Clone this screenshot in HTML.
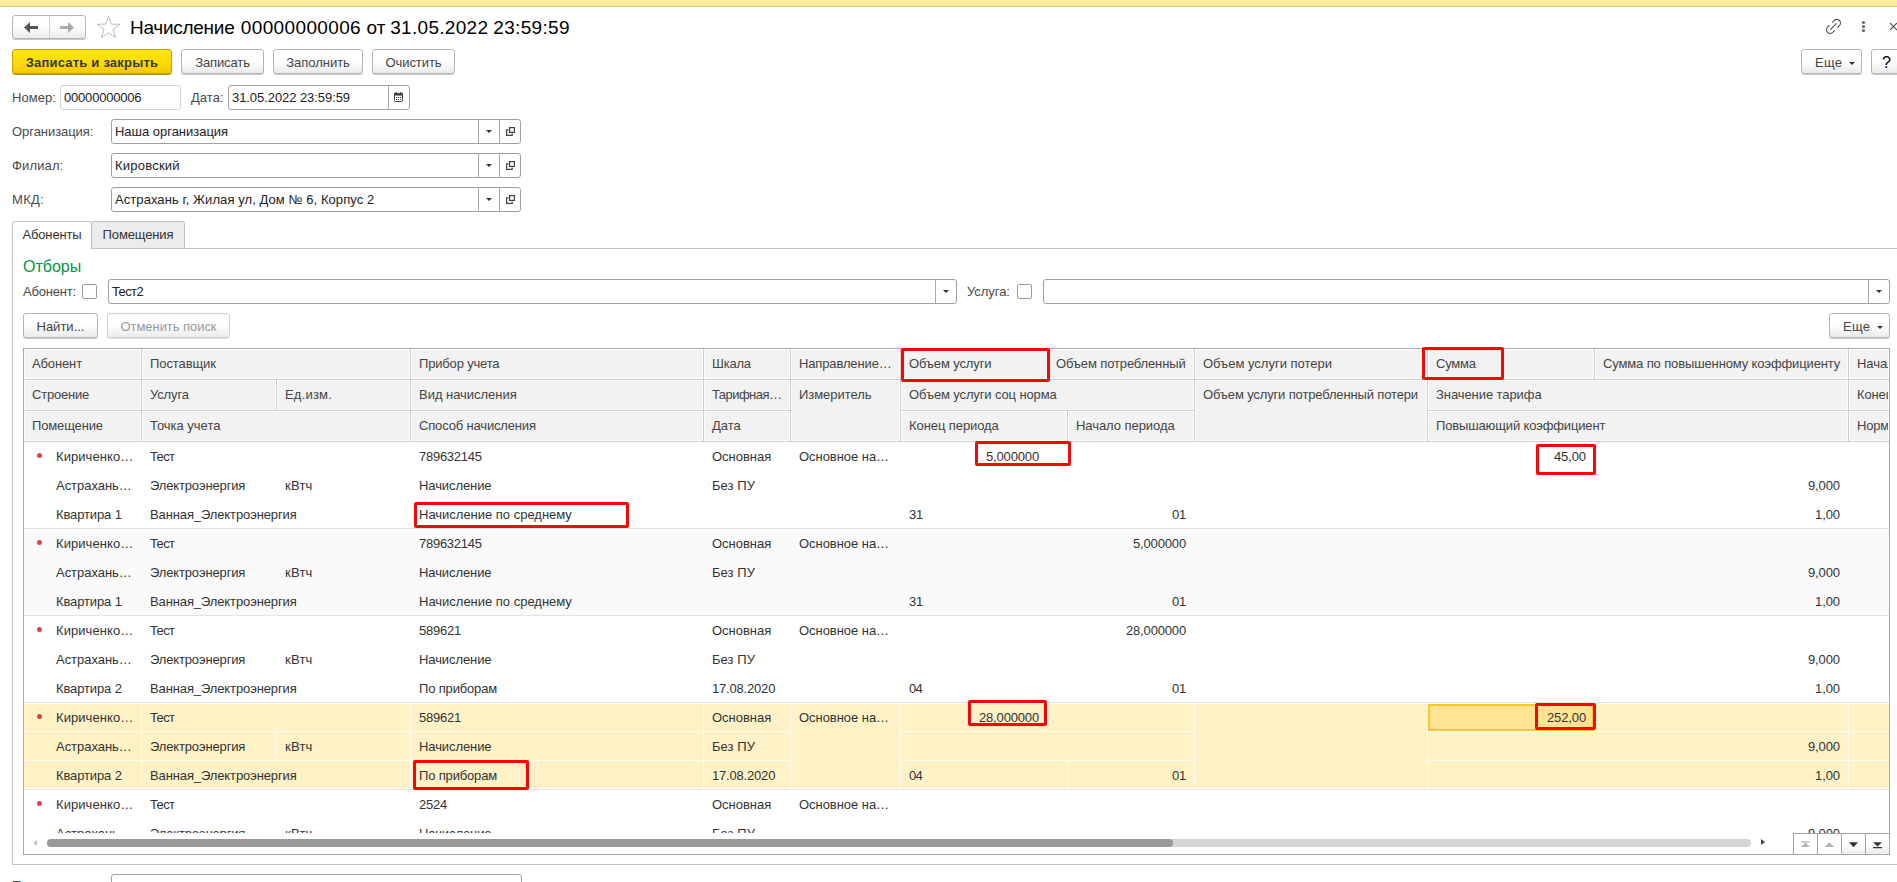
<!DOCTYPE html>
<html lang="ru"><head><meta charset="utf-8"><title>Начисление</title>
<style>
*{box-sizing:border-box;margin:0;padding:0}
html,body{width:1897px;height:882px;overflow:hidden;background:#fff}
body{position:relative;font-family:"Liberation Sans",Arial,sans-serif;font-size:13px;color:#333;line-height:15px}
.abs{position:absolute}
.topband{left:0;top:0;width:1897px;height:7px;background:#fbec9d;border-bottom:1px solid #d9c873}
.btn{position:absolute;height:25px;border:1px solid #b5b5b5;border-radius:3px;background:linear-gradient(#ffffff 0%,#ffffff 45%,#ebebeb 100%);box-shadow:0 1px 0 0 #c8c8c8;color:#444;text-align:center;line-height:25px;font-size:13px;white-space:nowrap}
.btn.def{background:linear-gradient(#ffe612 0%,#ffdc00 50%,#f3c900 100%);border-color:#c2a100;color:#35384d;font-weight:bold;box-shadow:0 1px 0 0 #b89b10}
.btn.dis{color:#9a9a9a;border-color:#cfcfcf;box-shadow:0 1px 0 0 #dedede}
.lbl{position:absolute;white-space:nowrap;color:#4a4a4a}
.inp{position:absolute;height:25px;border:1px solid #a0a0a0;border-radius:3px;background:#fff;color:#222;line-height:23px;padding-left:3px;white-space:nowrap;overflow:hidden}
.inp.ro{border-color:#d4d4d4}
.inp .sep{position:absolute;top:0;bottom:0;width:1px;background:#a8a8a8}
.tri{position:absolute;width:0;height:0;border-left:3px solid transparent;border-right:3px solid transparent;border-top:3px solid #333}
.title{position:absolute;left:131px;top:16px;font-size:19px;line-height:24px;color:#000;white-space:nowrap}
.chk{position:absolute;width:15px;height:15px;border:1px solid #9a9a9a;border-radius:2px;background:#fff}
.tab{position:absolute;top:221px;height:28px;border:1px solid #c3c3c3;border-bottom:none;border-radius:3px 3px 0 0;text-align:center;line-height:26px;color:#333}
.hc{position:absolute;background:#f2f2f2;color:#444;white-space:nowrap;overflow:hidden;padding-left:7px;line-height:28px;border:1px solid #fdfdfd}
.c{position:absolute;white-space:nowrap;overflow:hidden;color:#333;height:29px;line-height:29px}
.r{text-align:right}
.red{position:absolute;border:3px solid #fb0408;border-radius:2px}
</style></head>
<body>
<div class="abs topband"></div>
<div class="btn" style="left:12px;top:15px;width:74px;height:24px"></div>
<div class="abs" style="left:49px;top:16px;width:1px;height:22px;background:#cfcfcf"></div>
<svg class="abs" style="left:0;top:0" width="130" height="44" viewBox="0 0 130 44"><path d="M24 27.5L30 22V26H38V29H30V33z" fill="#555"/><path d="M60 26H68V22L74 27.5L68 33V29H60z" fill="#ababab"/><path d="M108.5 16.2L111.3 24.1L119.8 24.3L113 29.5L115.5 37.6L108.5 32.8L101.5 37.6L104 29.5L97.2 24.3L105.7 24.1z" fill="#fff" stroke="#b4bec9" stroke-width="1"/></svg>
<div class="title"><span style="margin-left:-0.96px;letter-spacing:-0.280px">Начисление</span> <span style="margin-left:1.12px;letter-spacing:0.354px">00000000006</span> <span style="margin-left:0.23px;letter-spacing:0.054px">от</span> <span style="margin-left:-0.58px;letter-spacing:0.310px">31.05.2022</span> <span style="margin-left:-0.40px;letter-spacing:0.328px">23:59:59</span></div>
<svg class="abs" style="left:1817px;top:10px" width="80" height="34" viewBox="1817 10 80 34"><g transform="translate(1833.5 26.4) rotate(-45)" fill="none" stroke="#5c5c5c" stroke-width="1.2" stroke-linecap="round"><path d="M2.4 -3.65H4.7A3.65 3.65 0 0 1 4.7 3.65H2.4"/><path d="M-2.4 -3.65H-4.7A3.65 3.65 0 0 0 -4.7 3.65H-2.4"/><path d="M-4 0H4"/></g><circle cx="1863.5" cy="22.5" r="1.55" fill="#666"/><circle cx="1863.5" cy="26.5" r="1.55" fill="#666"/><circle cx="1863.5" cy="30.6" r="1.55" fill="#666"/><path d="M1890 23l7 7M1890 30l7-7" stroke="#555" stroke-width="1.1" fill="none"/></svg>
<div class="btn def" style="left:12px;top:49px;width:160px"><span style="letter-spacing:0.200px">Записать и закрыть</span></div>
<div class="btn " style="left:181px;top:49px;width:83px"><span style="letter-spacing:-0.105px">Записать</span></div>
<div class="btn " style="left:273px;top:49px;width:90px"><span style="letter-spacing:-0.012px">Заполнить</span></div>
<div class="btn " style="left:372px;top:49px;width:83px"><span style="letter-spacing:-0.074px">Очистить</span></div>
<div class="btn" style="left:1801px;top:49px;width:61px;text-align:left;padding-left:13px"><span style="letter-spacing:0.3px">Еще</span><div class="tri" style="left:47px;top:12px"></div></div>
<div class="btn" style="left:1871px;top:49px;width:32px;color:#000;font-size:16px;text-align:left;padding-left:10px">?</div>
<div class="lbl" style="left:12px;top:90px"><span style="letter-spacing:0.065px">Номер:</span></div>
<div class="inp ro" style="left:60px;top:85px;width:121px"><span style="letter-spacing:-0.195px">00000000006</span></div>
<div class="lbl" style="left:191px;top:90px"><span style="letter-spacing:0.034px">Дата:</span></div>
<div class="inp" style="left:228px;top:85px;width:182px"><span style="letter-spacing:-0.067px">31.05.2022 23:59:59</span><div class="sep" style="left:159px"></div><svg class="abs" style="left:165px;top:6px" width="9" height="10" viewBox="0 0 9 10"><rect x="0.5" y="1.5" width="8" height="8" rx="0.8" fill="#fff" stroke="#444" stroke-width="1"/><rect x="0" y="1" width="9" height="2.6" fill="#444"/><rect x="1.6" y="0" width="1.3" height="2" fill="#444"/><rect x="6.1" y="0" width="1.3" height="2" fill="#444"/><path d="M2 5.5h1.1M4 5.5h1.1M6 5.5h1.1M2 7.5h1.1M4 7.5h1.1M6 7.5h1.1" stroke="#444" stroke-width="1.1"/></svg></div>
<div class="lbl" style="left:12px;top:124px"><span style="letter-spacing:-0.055px">Организация:</span></div>
<div class="inp" style="left:111px;top:119px;width:410px"><span style="letter-spacing:-0.022px">Наша организация</span><div class="sep" style="left:366px"></div><div class="tri" style="left:374px;top:10px"></div><div class="sep" style="left:387px"></div><svg class="abs" style="left:394px;top:7px" width="9" height="9" viewBox="0 0 9 9"><rect x="3.6" y="0.6" width="4.8" height="4.8" fill="#fff" stroke="#444" stroke-width="1.2"/><path d="M2.4 2.9H0.6V8.4H6.2V6.5" fill="none" stroke="#444" stroke-width="1.2"/></svg></div>
<div class="lbl" style="left:12px;top:158px"><span style="letter-spacing:0.136px">Филиал:</span></div>
<div class="inp" style="left:111px;top:153px;width:410px"><span style="letter-spacing:0.226px">Кировский</span><div class="sep" style="left:366px"></div><div class="tri" style="left:374px;top:10px"></div><div class="sep" style="left:387px"></div><svg class="abs" style="left:394px;top:7px" width="9" height="9" viewBox="0 0 9 9"><rect x="3.6" y="0.6" width="4.8" height="4.8" fill="#fff" stroke="#444" stroke-width="1.2"/><path d="M2.4 2.9H0.6V8.4H6.2V6.5" fill="none" stroke="#444" stroke-width="1.2"/></svg></div>
<div class="lbl" style="left:12px;top:192px"><span style="letter-spacing:0.296px">МКД:</span></div>
<div class="inp" style="left:111px;top:187px;width:410px"><span style="letter-spacing:0.071px">Астрахань г, Жилая ул, Дом № 6, Корпус 2</span><div class="sep" style="left:366px"></div><div class="tri" style="left:374px;top:10px"></div><div class="sep" style="left:387px"></div><svg class="abs" style="left:394px;top:7px" width="9" height="9" viewBox="0 0 9 9"><rect x="3.6" y="0.6" width="4.8" height="4.8" fill="#fff" stroke="#444" stroke-width="1.2"/><path d="M2.4 2.9H0.6V8.4H6.2V6.5" fill="none" stroke="#444" stroke-width="1.2"/></svg></div>
<div class="abs" style="left:12px;top:248px;width:1890px;height:617px;border:1px solid #c3c3c3;border-right:none"></div>
<div class="tab" style="left:12px;width:80px;background:#fff;height:27px"><span style="letter-spacing:-0.154px">Абоненты</span></div>
<div class="abs" style="left:13px;top:248px;width:78px;height:1px;background:#fff"></div>
<div class="tab" style="left:91px;width:94px;background:#ececec;height:27px;border-bottom:none"><span style="letter-spacing:-0.127px">Помещения</span></div>
<div class="abs" style="left:23px;top:258px;font-size:16px;line-height:18px;color:#009646">Отборы</div>
<div class="lbl" style="left:23px;top:284px"><span style="letter-spacing:-0.198px">Абонент:</span></div>
<div class="chk" style="left:82px;top:284px"></div>
<div class="inp" style="left:108px;top:279px;width:849px"><span style="letter-spacing:-0.627px">Тест2</span><div class="sep" style="left:826px"></div><div class="tri" style="left:834px;top:10px"></div></div>
<div class="lbl" style="left:967px;top:284px"><span style="letter-spacing:-0.061px">Услуга:</span></div>
<div class="chk" style="left:1017px;top:284px"></div>
<div class="inp" style="left:1043px;top:279px;width:847px"><div class="sep" style="left:824px"></div><div class="tri" style="left:832px;top:10px"></div></div>
<div class="btn " style="left:23px;top:313px;width:75px"><span style="letter-spacing:0.009px">Найти...</span></div>
<div class="btn dis" style="left:107px;top:313px;width:123px"><span style="letter-spacing:-0.052px">Отменить поиск</span></div>
<div class="btn" style="left:1829px;top:313px;width:61px;text-align:left;padding-left:13px"><span style="letter-spacing:0.3px">Еще</span><div class="tri" style="left:47px;top:12px"></div></div>
<div class="abs" style="left:23px;top:348px;width:1867px;height:507px;border:1px solid #a8a8a8;background:#fff;overflow:hidden" id="tbl">
<div class="abs" style="left:0;top:0;width:1865px;height:93px;background:#cecece"></div>
<div class="hc" style="left:0px;top:0px;width:117px;height:30px"><span style="letter-spacing:-0.127px">Абонент</span></div>
<div class="hc" style="left:0px;top:31px;width:117px;height:30px"><span style="letter-spacing:-0.213px">Строение</span></div>
<div class="hc" style="left:0px;top:62px;width:117px;height:30px"><span style="letter-spacing:-0.149px">Помещение</span></div>
<div class="hc" style="left:118px;top:0px;width:268px;height:30px"><span style="letter-spacing:-0.090px">Поставщик</span></div>
<div class="hc" style="left:118px;top:31px;width:134px;height:30px"><span style="letter-spacing:-0.136px">Услуга</span></div>
<div class="hc" style="left:253px;top:31px;width:133px;height:30px"><span style="letter-spacing:0.194px">Ед.изм.</span></div>
<div class="hc" style="left:118px;top:62px;width:268px;height:30px"><span style="letter-spacing:-0.015px">Точка учета</span></div>
<div class="hc" style="left:387px;top:0px;width:292px;height:30px"><span style="letter-spacing:-0.170px">Прибор учета</span></div>
<div class="hc" style="left:387px;top:31px;width:292px;height:30px"><span style="letter-spacing:-0.026px">Вид начисления</span></div>
<div class="hc" style="left:387px;top:62px;width:292px;height:30px"><span style="letter-spacing:-0.158px">Способ начисления</span></div>
<div class="hc" style="left:680px;top:0px;width:86px;height:30px"><span style="letter-spacing:-0.245px">Шкала</span></div>
<div class="hc" style="left:680px;top:31px;width:86px;height:30px"><span style="letter-spacing:-0.531px">Тарифная…</span></div>
<div class="hc" style="left:680px;top:62px;width:86px;height:30px"><span style="letter-spacing:-0.055px">Дата</span></div>
<div class="hc" style="left:767px;top:0px;width:109px;height:30px"><span style="letter-spacing:-0.134px">Направление…</span></div>
<div class="hc" style="left:767px;top:31px;width:109px;height:61px"><span style="letter-spacing:-0.051px">Измеритель</span></div>
<div class="hc" style="left:877px;top:0px;width:146px;height:30px"><span style="letter-spacing:-0.129px">Объем услуги</span></div>
<div class="hc" style="left:1024px;top:0px;width:146px;height:30px"><span style="letter-spacing:-0.132px">Объем потребленный</span></div>
<div class="hc" style="left:877px;top:31px;width:293px;height:30px"><span style="letter-spacing:-0.125px">Объем услуги соц норма</span></div>
<div class="hc" style="left:877px;top:62px;width:166px;height:30px"><span style="letter-spacing:-0.083px">Конец периода</span></div>
<div class="hc" style="left:1044px;top:62px;width:126px;height:30px"><span style="letter-spacing:-0.061px">Начало периода</span></div>
<div class="hc" style="left:1171px;top:0px;width:232px;height:30px"><span style="letter-spacing:-0.005px">Объем услуги потери</span></div>
<div class="hc" style="left:1171px;top:31px;width:232px;height:61px"><span style="letter-spacing:-0.146px">Объем услуги потребленный потери</span></div>
<div class="hc" style="left:1404px;top:0px;width:166px;height:30px"><span style="letter-spacing:-0.199px">Сумма</span></div>
<div class="hc" style="left:1571px;top:0px;width:253px;height:30px"><span style="letter-spacing:-0.128px">Сумма по повышенному коэффициенту</span></div>
<div class="hc" style="left:1404px;top:31px;width:420px;height:30px"><span style="letter-spacing:-0.077px">Значение тарифа</span></div>
<div class="hc" style="left:1404px;top:62px;width:420px;height:30px"><span style="letter-spacing:-0.146px">Повышающий коэффициент</span></div>
<div class="hc" style="left:1825px;top:0px;width:40px;height:30px"><span style="letter-spacing:-0.073px">Начало</span></div>
<div class="hc" style="left:1825px;top:31px;width:40px;height:30px"><span style="letter-spacing:-0.132px">Конец</span></div>
<div class="hc" style="left:1825px;top:62px;width:40px;height:30px"><span style="letter-spacing:-0.203px">Норма</span></div>
<div class="abs" style="left:0;top:93px;width:1865px;height:87px;background:#fff;border-bottom:1px solid #e4e4e4"></div>
<div class="abs" style="left:13px;top:104px;width:5px;height:5px;border-radius:3px;background:#de424a"></div>
<div class="c" style="left:0px;top:93px;width:117px;padding-left:32px;padding-right:0px"><span style="letter-spacing:0.067px">Кириченко…</span></div>
<div class="c" style="left:0px;top:122px;width:117px;padding-left:32px;padding-right:0px"><span style="letter-spacing:-0.031px">Астрахань…</span></div>
<div class="c" style="left:0px;top:151px;width:117px;padding-left:32px;padding-right:0px"><span style="letter-spacing:-0.128px">Квартира 1</span></div>
<div class="c" style="left:118px;top:93px;width:268px;padding-left:8px;padding-right:0px"><span style="letter-spacing:-0.637px">Тест</span></div>
<div class="c" style="left:118px;top:122px;width:134px;padding-left:8px;padding-right:0px"><span style="letter-spacing:-0.147px">Электроэнергия</span></div>
<div class="c" style="left:253px;top:122px;width:133px;padding-left:8px;padding-right:0px"><span style="letter-spacing:0.233px">кВтч</span></div>
<div class="c" style="left:118px;top:151px;width:268px;padding-left:8px;padding-right:0px"><span style="letter-spacing:-0.113px">Ванная_Электроэнергия</span></div>
<div class="c" style="left:387px;top:93px;width:292px;padding-left:8px;padding-right:0px"><span style="letter-spacing:-0.270px">789632145</span></div>
<div class="c" style="left:387px;top:122px;width:292px;padding-left:8px;padding-right:0px"><span style="letter-spacing:-0.088px">Начисление</span></div>
<div class="c" style="left:387px;top:151px;width:292px;padding-left:8px;padding-right:0px"><span style="letter-spacing:-0.011px">Начисление по среднему</span></div>
<div class="c" style="left:680px;top:93px;width:86px;padding-left:8px;padding-right:0px"><span style="letter-spacing:-0.023px">Основная</span></div>
<div class="c" style="left:680px;top:122px;width:86px;padding-left:8px;padding-right:0px"><span style="letter-spacing:0.053px">Без ПУ</span></div>
<div class="c" style="left:767px;top:93px;width:109px;padding-left:8px;padding-right:0px"><span style="letter-spacing:-0.046px">Основное на…</span></div>
<div class="c r" style="left:877px;top:93px;width:146px;padding-left:8px;padding-right:8px"><span style="letter-spacing:-0.153px">5,000000</span></div>
<div class="c" style="left:877px;top:151px;width:166px;padding-left:8px;padding-right:0px"><span style="letter-spacing:-0.230px">31</span></div>
<div class="c r" style="left:1044px;top:151px;width:126px;padding-left:8px;padding-right:8px"><span style="letter-spacing:-0.230px">01</span></div>
<div class="c r" style="left:1404px;top:93px;width:166px;padding-left:8px;padding-right:8px"><span style="letter-spacing:-0.106px">45,00</span></div>
<div class="c r" style="left:1404px;top:122px;width:420px;padding-left:8px;padding-right:8px"><span style="letter-spacing:-0.106px">9,000</span></div>
<div class="c r" style="left:1404px;top:151px;width:420px;padding-left:8px;padding-right:8px"><span style="letter-spacing:-0.075px">1,00</span></div>
<div class="abs" style="left:0;top:180px;width:1865px;height:87px;background:#fafafa;border-bottom:1px solid #e4e4e4"></div>
<div class="abs" style="left:13px;top:191px;width:5px;height:5px;border-radius:3px;background:#de424a"></div>
<div class="c" style="left:0px;top:180px;width:117px;padding-left:32px;padding-right:0px"><span style="letter-spacing:0.067px">Кириченко…</span></div>
<div class="c" style="left:0px;top:209px;width:117px;padding-left:32px;padding-right:0px"><span style="letter-spacing:-0.031px">Астрахань…</span></div>
<div class="c" style="left:0px;top:238px;width:117px;padding-left:32px;padding-right:0px"><span style="letter-spacing:-0.128px">Квартира 1</span></div>
<div class="c" style="left:118px;top:180px;width:268px;padding-left:8px;padding-right:0px"><span style="letter-spacing:-0.637px">Тест</span></div>
<div class="c" style="left:118px;top:209px;width:134px;padding-left:8px;padding-right:0px"><span style="letter-spacing:-0.147px">Электроэнергия</span></div>
<div class="c" style="left:253px;top:209px;width:133px;padding-left:8px;padding-right:0px"><span style="letter-spacing:0.233px">кВтч</span></div>
<div class="c" style="left:118px;top:238px;width:268px;padding-left:8px;padding-right:0px"><span style="letter-spacing:-0.113px">Ванная_Электроэнергия</span></div>
<div class="c" style="left:387px;top:180px;width:292px;padding-left:8px;padding-right:0px"><span style="letter-spacing:-0.270px">789632145</span></div>
<div class="c" style="left:387px;top:209px;width:292px;padding-left:8px;padding-right:0px"><span style="letter-spacing:-0.088px">Начисление</span></div>
<div class="c" style="left:387px;top:238px;width:292px;padding-left:8px;padding-right:0px"><span style="letter-spacing:-0.011px">Начисление по среднему</span></div>
<div class="c" style="left:680px;top:180px;width:86px;padding-left:8px;padding-right:0px"><span style="letter-spacing:-0.023px">Основная</span></div>
<div class="c" style="left:680px;top:209px;width:86px;padding-left:8px;padding-right:0px"><span style="letter-spacing:0.053px">Без ПУ</span></div>
<div class="c" style="left:767px;top:180px;width:109px;padding-left:8px;padding-right:0px"><span style="letter-spacing:-0.046px">Основное на…</span></div>
<div class="c r" style="left:1024px;top:180px;width:146px;padding-left:8px;padding-right:8px"><span style="letter-spacing:-0.153px">5,000000</span></div>
<div class="c" style="left:877px;top:238px;width:166px;padding-left:8px;padding-right:0px"><span style="letter-spacing:-0.230px">31</span></div>
<div class="c r" style="left:1044px;top:238px;width:126px;padding-left:8px;padding-right:8px"><span style="letter-spacing:-0.230px">01</span></div>
<div class="c r" style="left:1404px;top:209px;width:420px;padding-left:8px;padding-right:8px"><span style="letter-spacing:-0.106px">9,000</span></div>
<div class="c r" style="left:1404px;top:238px;width:420px;padding-left:8px;padding-right:8px"><span style="letter-spacing:-0.075px">1,00</span></div>
<div class="abs" style="left:0;top:267px;width:1865px;height:87px;background:#fff;border-bottom:1px solid #e4e4e4"></div>
<div class="abs" style="left:13px;top:278px;width:5px;height:5px;border-radius:3px;background:#de424a"></div>
<div class="c" style="left:0px;top:267px;width:117px;padding-left:32px;padding-right:0px"><span style="letter-spacing:0.067px">Кириченко…</span></div>
<div class="c" style="left:0px;top:296px;width:117px;padding-left:32px;padding-right:0px"><span style="letter-spacing:-0.031px">Астрахань…</span></div>
<div class="c" style="left:0px;top:325px;width:117px;padding-left:32px;padding-right:0px"><span style="letter-spacing:-0.126px">Квартира 2</span></div>
<div class="c" style="left:118px;top:267px;width:268px;padding-left:8px;padding-right:0px"><span style="letter-spacing:-0.637px">Тест</span></div>
<div class="c" style="left:118px;top:296px;width:134px;padding-left:8px;padding-right:0px"><span style="letter-spacing:-0.147px">Электроэнергия</span></div>
<div class="c" style="left:253px;top:296px;width:133px;padding-left:8px;padding-right:0px"><span style="letter-spacing:0.233px">кВтч</span></div>
<div class="c" style="left:118px;top:325px;width:268px;padding-left:8px;padding-right:0px"><span style="letter-spacing:-0.113px">Ванная_Электроэнергия</span></div>
<div class="c" style="left:387px;top:267px;width:292px;padding-left:8px;padding-right:0px"><span style="letter-spacing:-0.230px">589621</span></div>
<div class="c" style="left:387px;top:296px;width:292px;padding-left:8px;padding-right:0px"><span style="letter-spacing:-0.088px">Начисление</span></div>
<div class="c" style="left:387px;top:325px;width:292px;padding-left:8px;padding-right:0px"><span style="letter-spacing:-0.163px">По приборам</span></div>
<div class="c" style="left:680px;top:267px;width:86px;padding-left:8px;padding-right:0px"><span style="letter-spacing:-0.023px">Основная</span></div>
<div class="c" style="left:680px;top:296px;width:86px;padding-left:8px;padding-right:0px"><span style="letter-spacing:0.053px">Без ПУ</span></div>
<div class="c" style="left:680px;top:325px;width:86px;padding-left:8px;padding-right:0px"><span style="letter-spacing:-0.185px">17.08.2020</span></div>
<div class="c" style="left:767px;top:267px;width:109px;padding-left:8px;padding-right:0px"><span style="letter-spacing:-0.046px">Основное на…</span></div>
<div class="c r" style="left:1024px;top:267px;width:146px;padding-left:8px;padding-right:8px"><span style="letter-spacing:-0.161px">28,000000</span></div>
<div class="c" style="left:877px;top:325px;width:166px;padding-left:8px;padding-right:0px"><span style="letter-spacing:-0.771px">04</span></div>
<div class="c r" style="left:1044px;top:325px;width:126px;padding-left:8px;padding-right:8px"><span style="letter-spacing:-0.230px">01</span></div>
<div class="c r" style="left:1404px;top:296px;width:420px;padding-left:8px;padding-right:8px"><span style="letter-spacing:-0.106px">9,000</span></div>
<div class="c r" style="left:1404px;top:325px;width:420px;padding-left:8px;padding-right:8px"><span style="letter-spacing:-0.075px">1,00</span></div>
<div class="abs" style="left:0;top:354px;width:1865px;height:87px;background:#fff2c6;border-bottom:1px solid #e4e4e4"></div>
<div class="abs" style="left:0;top:354px;width:1865px;height:1px;background:#fffdf3"></div>
<div class="abs" style="left:0;top:439px;width:1865px;height:1px;background:#fffdf3"></div>
<div class="abs" style="left:117px;top:354px;width:1px;height:86px;background:#fffdf3"></div>
<div class="abs" style="left:386px;top:354px;width:1px;height:86px;background:#fffdf3"></div>
<div class="abs" style="left:679px;top:354px;width:1px;height:86px;background:#fffdf3"></div>
<div class="abs" style="left:766px;top:354px;width:1px;height:86px;background:#fffdf3"></div>
<div class="abs" style="left:876px;top:354px;width:1px;height:86px;background:#fffdf3"></div>
<div class="abs" style="left:1170px;top:354px;width:1px;height:86px;background:#fffdf3"></div>
<div class="abs" style="left:1403px;top:354px;width:1px;height:86px;background:#fffdf3"></div>
<div class="abs" style="left:1824px;top:354px;width:1px;height:86px;background:#fffdf3"></div>
<div class="abs" style="left:252px;top:383px;width:1px;height:29px;background:#fffdf3"></div>
<div class="abs" style="left:1023px;top:354px;width:1px;height:29px;background:#fffdf3"></div>
<div class="abs" style="left:1043px;top:412px;width:1px;height:28px;background:#fffdf3"></div>
<div class="abs" style="left:1570px;top:354px;width:1px;height:29px;background:#fffdf3"></div>
<div class="abs" style="left:0px;top:382px;width:766px;height:1px;background:#fffdf3"></div>
<div class="abs" style="left:876px;top:382px;width:294px;height:1px;background:#fffdf3"></div>
<div class="abs" style="left:1403px;top:382px;width:462px;height:1px;background:#fffdf3"></div>
<div class="abs" style="left:0px;top:411px;width:766px;height:1px;background:#fffdf3"></div>
<div class="abs" style="left:876px;top:411px;width:294px;height:1px;background:#fffdf3"></div>
<div class="abs" style="left:1403px;top:411px;width:462px;height:1px;background:#fffdf3"></div>
<div class="abs" style="left:1404px;top:355px;width:166px;height:27px;background:#ffe591;border:2px solid #f9c632"></div>
<div class="abs" style="left:13px;top:365px;width:5px;height:5px;border-radius:3px;background:#de424a"></div>
<div class="c" style="left:0px;top:354px;width:117px;padding-left:32px;padding-right:0px"><span style="letter-spacing:0.067px">Кириченко…</span></div>
<div class="c" style="left:0px;top:383px;width:117px;padding-left:32px;padding-right:0px"><span style="letter-spacing:-0.031px">Астрахань…</span></div>
<div class="c" style="left:0px;top:412px;width:117px;padding-left:32px;padding-right:0px"><span style="letter-spacing:-0.126px">Квартира 2</span></div>
<div class="c" style="left:118px;top:354px;width:268px;padding-left:8px;padding-right:0px"><span style="letter-spacing:-0.637px">Тест</span></div>
<div class="c" style="left:118px;top:383px;width:134px;padding-left:8px;padding-right:0px"><span style="letter-spacing:-0.147px">Электроэнергия</span></div>
<div class="c" style="left:253px;top:383px;width:133px;padding-left:8px;padding-right:0px"><span style="letter-spacing:0.233px">кВтч</span></div>
<div class="c" style="left:118px;top:412px;width:268px;padding-left:8px;padding-right:0px"><span style="letter-spacing:-0.113px">Ванная_Электроэнергия</span></div>
<div class="c" style="left:387px;top:354px;width:292px;padding-left:8px;padding-right:0px"><span style="letter-spacing:-0.230px">589621</span></div>
<div class="c" style="left:387px;top:383px;width:292px;padding-left:8px;padding-right:0px"><span style="letter-spacing:-0.088px">Начисление</span></div>
<div class="c" style="left:387px;top:412px;width:292px;padding-left:8px;padding-right:0px"><span style="letter-spacing:-0.163px">По приборам</span></div>
<div class="c" style="left:680px;top:354px;width:86px;padding-left:8px;padding-right:0px"><span style="letter-spacing:-0.023px">Основная</span></div>
<div class="c" style="left:680px;top:383px;width:86px;padding-left:8px;padding-right:0px"><span style="letter-spacing:0.053px">Без ПУ</span></div>
<div class="c" style="left:680px;top:412px;width:86px;padding-left:8px;padding-right:0px"><span style="letter-spacing:-0.185px">17.08.2020</span></div>
<div class="c" style="left:767px;top:354px;width:109px;padding-left:8px;padding-right:0px"><span style="letter-spacing:-0.046px">Основное на…</span></div>
<div class="c r" style="left:877px;top:354px;width:146px;padding-left:8px;padding-right:8px"><span style="letter-spacing:-0.161px">28,000000</span></div>
<div class="c" style="left:877px;top:412px;width:166px;padding-left:8px;padding-right:0px"><span style="letter-spacing:-0.771px">04</span></div>
<div class="c r" style="left:1044px;top:412px;width:126px;padding-left:8px;padding-right:8px"><span style="letter-spacing:-0.230px">01</span></div>
<div class="c r" style="left:1404px;top:354px;width:166px;padding-left:8px;padding-right:8px"><span style="letter-spacing:-0.127px">252,00</span></div>
<div class="c r" style="left:1404px;top:383px;width:420px;padding-left:8px;padding-right:8px"><span style="letter-spacing:-0.106px">9,000</span></div>
<div class="c r" style="left:1404px;top:412px;width:420px;padding-left:8px;padding-right:8px"><span style="letter-spacing:-0.075px">1,00</span></div>
<div class="abs" style="left:0;top:441px;width:1865px;height:87px;background:#fff;border-bottom:1px solid #e4e4e4"></div>
<div class="abs" style="left:13px;top:452px;width:5px;height:5px;border-radius:3px;background:#de424a"></div>
<div class="c" style="left:0px;top:441px;width:117px;padding-left:32px;padding-right:0px"><span style="letter-spacing:0.067px">Кириченко…</span></div>
<div class="c" style="left:0px;top:470px;width:117px;padding-left:32px;padding-right:0px"><span style="letter-spacing:-0.031px">Астрахань…</span></div>
<div class="c" style="left:0px;top:499px;width:117px;padding-left:32px;padding-right:0px"><span style="letter-spacing:-0.126px">Квартира 2</span></div>
<div class="c" style="left:118px;top:441px;width:268px;padding-left:8px;padding-right:0px"><span style="letter-spacing:-0.637px">Тест</span></div>
<div class="c" style="left:118px;top:470px;width:134px;padding-left:8px;padding-right:0px"><span style="letter-spacing:-0.147px">Электроэнергия</span></div>
<div class="c" style="left:253px;top:470px;width:133px;padding-left:8px;padding-right:0px"><span style="letter-spacing:0.233px">кВтч</span></div>
<div class="c" style="left:118px;top:499px;width:268px;padding-left:8px;padding-right:0px"><span style="letter-spacing:-0.113px">Ванная_Электроэнергия</span></div>
<div class="c" style="left:387px;top:441px;width:292px;padding-left:8px;padding-right:0px"><span style="letter-spacing:-0.230px">2524</span></div>
<div class="c" style="left:387px;top:470px;width:292px;padding-left:8px;padding-right:0px"><span style="letter-spacing:-0.088px">Начисление</span></div>
<div class="c" style="left:680px;top:441px;width:86px;padding-left:8px;padding-right:0px"><span style="letter-spacing:-0.023px">Основная</span></div>
<div class="c" style="left:680px;top:470px;width:86px;padding-left:8px;padding-right:0px"><span style="letter-spacing:0.053px">Без ПУ</span></div>
<div class="c" style="left:767px;top:441px;width:109px;padding-left:8px;padding-right:0px"><span style="letter-spacing:-0.046px">Основное на…</span></div>
<div class="c r" style="left:1404px;top:470px;width:420px;padding-left:8px;padding-right:8px"><span style="letter-spacing:-0.106px">9,000</span></div>
<div class="abs" style="left:0;top:484px;width:1865px;height:21px;background:#fff"></div>
<div class="abs" style="left:23px;top:490px;width:1704px;height:8px;border-radius:4px;background:#d4d4d4"></div>
<div class="abs" style="left:23px;top:490px;width:1126px;height:8px;border-radius:4px;background:#999"></div>
<div class="abs" style="left:9px;top:491px;width:0;height:0;border-top:3px solid transparent;border-bottom:3px solid transparent;border-right:4px solid #c4c4c4"></div>
<div class="abs" style="left:1737px;top:490px;width:0;height:0;border-top:3.5px solid transparent;border-bottom:3.5px solid transparent;border-left:4px solid #444"></div>
<svg class="abs" style="left:1769px;top:484px" width="96" height="21" viewBox="0 0 96 21"><defs><linearGradient id="ng" x1="0" y1="0" x2="0" y2="1"><stop offset="0.45" stop-color="#fff"/><stop offset="1" stop-color="#ececec"/></linearGradient></defs><rect x="0" y="0" width="48" height="21" fill="#fff"/><rect x="48" y="0" width="48" height="21" fill="url(#ng)"/><path d="M0.5 0V21M24.5 0V21M48.5 0V21M72.5 0V21M0 0.5H96" stroke="#a3a3a3" stroke-width="1" fill="none"/><path d="M8 8.3h9v1.1h-9zM8 14L12.5 9.6L17 14zM32 14L36.5 9.2L41 14z" fill="#b3b3b3"/><path d="M56 9.2h9L60.5 14.2zM80 9.2h9L84.5 13.6zM80 14.1h9v1.1h-9z" fill="#333"/></svg>
</div>
<div class="red" style="left:901px;top:348px;width:149px;height:34px"></div>
<div class="red" style="left:1422px;top:347px;width:82px;height:33px"></div>
<div class="red" style="left:975px;top:441px;width:96px;height:25px"></div>
<div class="red" style="left:1536px;top:444px;width:60px;height:31px"></div>
<div class="red" style="left:414px;top:502px;width:215px;height:26px"></div>
<div class="red" style="left:968px;top:700px;width:79px;height:26px"></div>
<div class="red" style="left:1535px;top:703px;width:61px;height:27px"></div>
<div class="red" style="left:413px;top:760px;width:116px;height:30px"></div>
<div class="lbl" style="left:12px;top:878px"><span style="letter-spacing:-0.117px">Примечание:</span></div>
<div class="inp" style="left:111px;top:874px;width:411px"></div>
</body></html>
